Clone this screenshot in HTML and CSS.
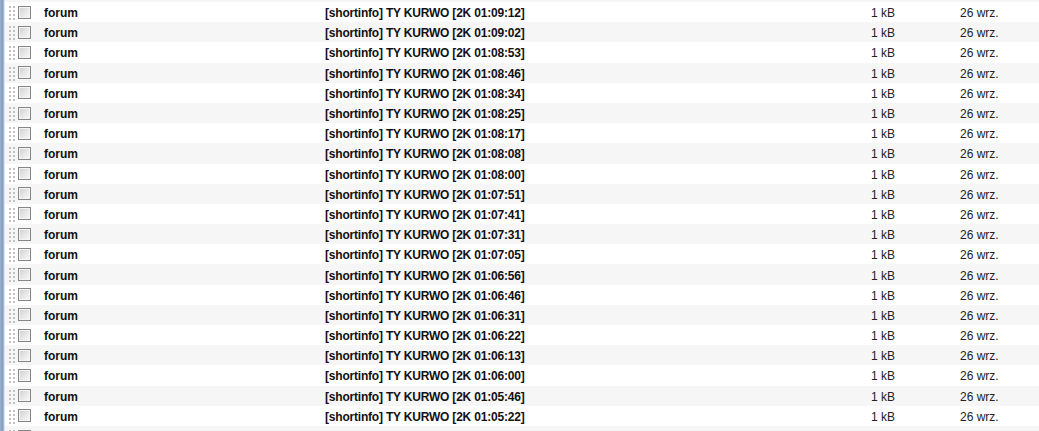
FILE: index.html
```html
<!DOCTYPE html>
<html lang="pl">
<head>
<meta charset="utf-8">
<title>Skrzynka</title>
<link rel="stylesheet" href="styles.css">
</head>
<body>
<div class="page">
  <div class="sidebar"></div>
  <div class="list">
    <div class="row row-stub row-top"><span class="grip"></span><span class="check"><span class="box"></span></span></div>
    <div class="row"><span class="grip"></span><span class="check"><span class="box"></span></span><span class="from">forum</span><span class="subject">[shortinfo] TY KURWO [2K 01:09:12]</span><span class="size">1 kB</span><span class="date">26 wrz.</span></div>
    <div class="row"><span class="grip"></span><span class="check"><span class="box"></span></span><span class="from">forum</span><span class="subject">[shortinfo] TY KURWO [2K 01:09:02]</span><span class="size">1 kB</span><span class="date">26 wrz.</span></div>
    <div class="row"><span class="grip"></span><span class="check"><span class="box"></span></span><span class="from">forum</span><span class="subject">[shortinfo] TY KURWO [2K 01:08:53]</span><span class="size">1 kB</span><span class="date">26 wrz.</span></div>
    <div class="row"><span class="grip"></span><span class="check"><span class="box"></span></span><span class="from">forum</span><span class="subject">[shortinfo] TY KURWO [2K 01:08:46]</span><span class="size">1 kB</span><span class="date">26 wrz.</span></div>
    <div class="row"><span class="grip"></span><span class="check"><span class="box"></span></span><span class="from">forum</span><span class="subject">[shortinfo] TY KURWO [2K 01:08:34]</span><span class="size">1 kB</span><span class="date">26 wrz.</span></div>
    <div class="row"><span class="grip"></span><span class="check"><span class="box"></span></span><span class="from">forum</span><span class="subject">[shortinfo] TY KURWO [2K 01:08:25]</span><span class="size">1 kB</span><span class="date">26 wrz.</span></div>
    <div class="row"><span class="grip"></span><span class="check"><span class="box"></span></span><span class="from">forum</span><span class="subject">[shortinfo] TY KURWO [2K 01:08:17]</span><span class="size">1 kB</span><span class="date">26 wrz.</span></div>
    <div class="row"><span class="grip"></span><span class="check"><span class="box"></span></span><span class="from">forum</span><span class="subject">[shortinfo] TY KURWO [2K 01:08:08]</span><span class="size">1 kB</span><span class="date">26 wrz.</span></div>
    <div class="row"><span class="grip"></span><span class="check"><span class="box"></span></span><span class="from">forum</span><span class="subject">[shortinfo] TY KURWO [2K 01:08:00]</span><span class="size">1 kB</span><span class="date">26 wrz.</span></div>
    <div class="row"><span class="grip"></span><span class="check"><span class="box"></span></span><span class="from">forum</span><span class="subject">[shortinfo] TY KURWO [2K 01:07:51]</span><span class="size">1 kB</span><span class="date">26 wrz.</span></div>
    <div class="row"><span class="grip"></span><span class="check"><span class="box"></span></span><span class="from">forum</span><span class="subject">[shortinfo] TY KURWO [2K 01:07:41]</span><span class="size">1 kB</span><span class="date">26 wrz.</span></div>
    <div class="row"><span class="grip"></span><span class="check"><span class="box"></span></span><span class="from">forum</span><span class="subject">[shortinfo] TY KURWO [2K 01:07:31]</span><span class="size">1 kB</span><span class="date">26 wrz.</span></div>
    <div class="row"><span class="grip"></span><span class="check"><span class="box"></span></span><span class="from">forum</span><span class="subject">[shortinfo] TY KURWO [2K 01:07:05]</span><span class="size">1 kB</span><span class="date">26 wrz.</span></div>
    <div class="row"><span class="grip"></span><span class="check"><span class="box"></span></span><span class="from">forum</span><span class="subject">[shortinfo] TY KURWO [2K 01:06:56]</span><span class="size">1 kB</span><span class="date">26 wrz.</span></div>
    <div class="row"><span class="grip"></span><span class="check"><span class="box"></span></span><span class="from">forum</span><span class="subject">[shortinfo] TY KURWO [2K 01:06:46]</span><span class="size">1 kB</span><span class="date">26 wrz.</span></div>
    <div class="row"><span class="grip"></span><span class="check"><span class="box"></span></span><span class="from">forum</span><span class="subject">[shortinfo] TY KURWO [2K 01:06:31]</span><span class="size">1 kB</span><span class="date">26 wrz.</span></div>
    <div class="row"><span class="grip"></span><span class="check"><span class="box"></span></span><span class="from">forum</span><span class="subject">[shortinfo] TY KURWO [2K 01:06:22]</span><span class="size">1 kB</span><span class="date">26 wrz.</span></div>
    <div class="row"><span class="grip"></span><span class="check"><span class="box"></span></span><span class="from">forum</span><span class="subject">[shortinfo] TY KURWO [2K 01:06:13]</span><span class="size">1 kB</span><span class="date">26 wrz.</span></div>
    <div class="row"><span class="grip"></span><span class="check"><span class="box"></span></span><span class="from">forum</span><span class="subject">[shortinfo] TY KURWO [2K 01:06:00]</span><span class="size">1 kB</span><span class="date">26 wrz.</span></div>
    <div class="row"><span class="grip"></span><span class="check"><span class="box"></span></span><span class="from">forum</span><span class="subject">[shortinfo] TY KURWO [2K 01:05:46]</span><span class="size">1 kB</span><span class="date">26 wrz.</span></div>
    <div class="row"><span class="grip"></span><span class="check"><span class="box"></span></span><span class="from">forum</span><span class="subject">[shortinfo] TY KURWO [2K 01:05:22]</span><span class="size">1 kB</span><span class="date">26 wrz.</span></div>
    <div class="row row-stub"><span class="grip"></span><span class="check"><span class="box"></span></span></div>
  </div>
</div>
</body>
</html>
```

FILE: styles.css
```css
html, body {
  margin: 0;
  padding: 0;
  height: 100%;
  overflow: hidden;
  background: #ffffff;
}

.page {
  display: flex;
  height: 100%;
  font-family: "Liberation Sans", Arial, sans-serif;
  font-size: 12px;
  color: #111;
}

.sidebar {
  width: 5px;
  flex: none;
  background: linear-gradient(to right, #98b0cd 0, #7f9cc0 3px, #c9d6e6 4px, #eef2f7 5px);
}

.list {
  flex: 1;
  display: flex;
  flex-direction: column;
}

.row {
  display: grid;
  grid-template-columns: 13px 26px 281px 500px 70px 65px 1fr;
  align-items: center;
  height: 20.2px;
  flex: none;
  background: #ffffff;
}

.row:nth-child(odd) {
  background: #f6f6f6;
}

.row-top {
  margin-top: -18.2px;
}

.grip {
  align-self: stretch;
  margin: 2px 0 2px 3px;
  background-image: radial-gradient(circle, #c2c2c2 0.9px, transparent 1.1px);
  background-size: 4px 4px;
  background-position: 0 1px;
  width: 8px;
}

.check {
  display: flex;
  align-items: center;
}

.box {
  box-sizing: border-box;
  width: 13px;
  height: 13px;
  border: 1px solid #858787;
  background: linear-gradient(135deg, #cfcfcf 0%, #e8e8e8 55%, #fafafa 100%);
  box-shadow: inset 0 0 0 1px #f4f4f4;
}

.from,
.subject,
.size,
.date {
  padding-top: 2px;
  white-space: nowrap;
}

.from,
.subject {
  font-weight: bold;
  color: #111;
}

.subject {
  letter-spacing: -0.2px;
}

.size {
  text-align: right;
  color: #222;
}

.date {
  grid-column: 7;
  color: #222;
}
```
